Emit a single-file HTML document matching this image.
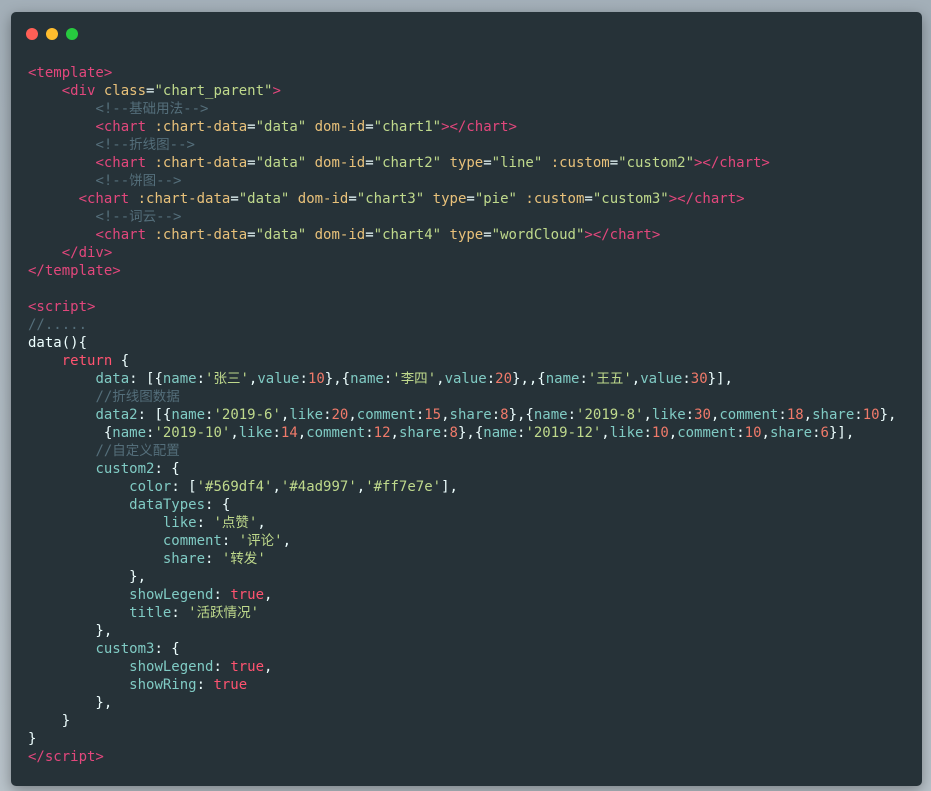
<!DOCTYPE html>
<html><head><meta charset="utf-8"><style>
html,body{margin:0;padding:0;width:931px;height:791px;overflow:hidden;background:linear-gradient(180deg,#a3afb8,#b9c3ca);}
.win{position:absolute;left:11px;top:12px;width:911px;height:774px;background:#263238;border-radius:5px;box-shadow:0 4px 14px rgba(0,0,0,.35);}
.dot{position:absolute;top:16px;width:12px;height:12px;border-radius:50%;}
pre{position:absolute;left:17px;top:52px;margin:0;font-family:"DejaVu Sans Mono","Liberation Mono","Noto Sans CJK SC",monospace;font-size:14px;line-height:18px;color:#eeffff;white-space:pre;}
.t{color:#e2477c}.a{color:#e8c17a}.s{color:#bfd98c}.c{color:#546e7a}.k{color:#80cbc4}.n{color:#f07a6a}.r{color:#ff5370}
.cj{font-family:"Noto Sans CJK SC",sans-serif;line-height:1;vertical-align:top;font-size:13.5px;position:relative;top:1px}
</style></head><body>
<div class="win">
<div class="dot" style="left:15px;background:#ff5f56"></div>
<div class="dot" style="left:35px;background:#ffbd2e"></div>
<div class="dot" style="left:55px;background:#27c93f"></div>
<pre><span class="t">&lt;template&gt;</span>
    <span class="t">&lt;div</span> <span class="a">class</span>=<span class="s">"chart_parent"</span><span class="t">&gt;</span>
        <span class="c">&lt;!--<span class="cj">基础用法</span>--&gt;</span>
        <span class="t">&lt;chart</span> <span class="a">:chart-data</span>=<span class="s">"data"</span> <span class="a">dom-id</span>=<span class="s">"chart1"</span><span class="t">&gt;&lt;/chart&gt;</span>
        <span class="c">&lt;!--<span class="cj">折线图</span>--&gt;</span>
        <span class="t">&lt;chart</span> <span class="a">:chart-data</span>=<span class="s">"data"</span> <span class="a">dom-id</span>=<span class="s">"chart2"</span> <span class="a">type</span>=<span class="s">"line"</span> <span class="a">:custom</span>=<span class="s">"custom2"</span><span class="t">&gt;&lt;/chart&gt;</span>
        <span class="c">&lt;!--<span class="cj">饼图</span>--&gt;</span>
      <span class="t">&lt;chart</span> <span class="a">:chart-data</span>=<span class="s">"data"</span> <span class="a">dom-id</span>=<span class="s">"chart3"</span> <span class="a">type</span>=<span class="s">"pie"</span> <span class="a">:custom</span>=<span class="s">"custom3"</span><span class="t">&gt;&lt;/chart&gt;</span>
        <span class="c">&lt;!--<span class="cj">词云</span>--&gt;</span>
        <span class="t">&lt;chart</span> <span class="a">:chart-data</span>=<span class="s">"data"</span> <span class="a">dom-id</span>=<span class="s">"chart4"</span> <span class="a">type</span>=<span class="s">"wordCloud"</span><span class="t">&gt;&lt;/chart&gt;</span>
    <span class="t">&lt;/div&gt;</span>
<span class="t">&lt;/template&gt;</span>

<span class="t">&lt;script&gt;</span>
<span class="c">//.....</span>
data(){
    <span class="r">return</span> {
        <span class="k">data</span>: [{<span class="k">name</span>:<span class="s">'<span class="cj">张三</span>'</span>,<span class="k">value</span>:<span class="n">10</span>},{<span class="k">name</span>:<span class="s">'<span class="cj">李四</span>'</span>,<span class="k">value</span>:<span class="n">20</span>},,{<span class="k">name</span>:<span class="s">'<span class="cj">王五</span>'</span>,<span class="k">value</span>:<span class="n">30</span>}],
        <span class="c">//<span class="cj">折线图数据</span></span>
        <span class="k">data2</span>: [{<span class="k">name</span>:<span class="s">'2019-6'</span>,<span class="k">like</span>:<span class="n">20</span>,<span class="k">comment</span>:<span class="n">15</span>,<span class="k">share</span>:<span class="n">8</span>},{<span class="k">name</span>:<span class="s">'2019-8'</span>,<span class="k">like</span>:<span class="n">30</span>,<span class="k">comment</span>:<span class="n">18</span>,<span class="k">share</span>:<span class="n">10</span>},
         {<span class="k">name</span>:<span class="s">'2019-10'</span>,<span class="k">like</span>:<span class="n">14</span>,<span class="k">comment</span>:<span class="n">12</span>,<span class="k">share</span>:<span class="n">8</span>},{<span class="k">name</span>:<span class="s">'2019-12'</span>,<span class="k">like</span>:<span class="n">10</span>,<span class="k">comment</span>:<span class="n">10</span>,<span class="k">share</span>:<span class="n">6</span>}],
        <span class="c">//<span class="cj">自定义配置</span></span>
        <span class="k">custom2</span>: {
            <span class="k">color</span>: [<span class="s">'#569df4'</span>,<span class="s">'#4ad997'</span>,<span class="s">'#ff7e7e'</span>],
            <span class="k">dataTypes</span>: {
                <span class="k">like</span>: <span class="s">'<span class="cj">点赞</span>'</span>,
                <span class="k">comment</span>: <span class="s">'<span class="cj">评论</span>'</span>,
                <span class="k">share</span>: <span class="s">'<span class="cj">转发</span>'</span>
            },
            <span class="k">showLegend</span>: <span class="r">true</span>,
            <span class="k">title</span>: <span class="s">'<span class="cj">活跃情况</span>'</span>
        },
        <span class="k">custom3</span>: {
            <span class="k">showLegend</span>: <span class="r">true</span>,
            <span class="k">showRing</span>: <span class="r">true</span>
        },
    }
}
<span class="t">&lt;/script&gt;</span></pre>
</div>
</body></html>
